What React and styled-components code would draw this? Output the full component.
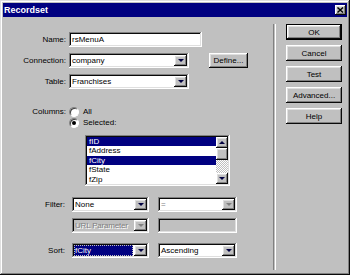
import React from "react";
import styled, { createGlobalStyle } from "styled-components";

const GlobalStyle = createGlobalStyle`
  html, body {
    margin: 0;
    padding: 0;
    background: #c0c0c0;
  }
  body {
    font-family: "Liberation Sans", Arial, sans-serif;
    font-size: 8px;
    color: #000;
  }
`;

// bevels used all over the classic dialog
const raised = `
  box-shadow: inset -1px -1px #0a0a0a, inset 1px 1px #ffffff,
    inset -2px -2px #808080, inset 2px 2px #dfdfdf;
`;
const sunken = `
  box-shadow: inset -1px -1px #ffffff, inset 1px 1px #808080,
    inset -2px -2px #dfdfdf, inset 2px 2px #0a0a0a;
`;

const Window = styled.div`
  width: 350px;
  height: 275px;
  box-sizing: border-box;
  padding: 3px 3px 3px 3px;
  background: #c0c0c0;
  display: flex;
  flex-direction: column;
  box-shadow: inset -1px -1px #0a0a0a, inset 1px 1px #dfdfdf,
    inset -2px -2px #808080, inset 2px 2px #ffffff;
`;

const TitleBar = styled.div`
  height: 14px;
  background: #000080;
  color: #fff;
  font-weight: bold;
  font-size: 9px;
  display: flex;
  align-items: center;
  justify-content: space-between;
  padding: 0 0 0 1px;
`;

const CloseButton = styled.div`
  width: 11px;
  height: 10px;
  margin-right: 1px;
  background: #c0c0c0;
  display: flex;
  align-items: center;
  justify-content: center;
  ${raised}
`;

const Body = styled.div`
  flex: 1;
  display: flex;
`;

const LeftPane = styled.div`
  width: 268px;
  padding-top: 15px;
  display: flex;
  flex-direction: column;
`;

const Separator = styled.div`
  width: 1px;
  margin: 7px 0 2px 2px;
  border-left: 1px solid #808080;
  border-right: 1px solid #ffffff;
`;

const RightPane = styled.div`
  margin-left: 10px;
  padding-top: 7px;
  display: flex;
  flex-direction: column;
  gap: 5px;
`;

const Row = styled.div`
  display: flex;
  align-items: ${(p) => p.$align || "center"};
  margin-top: ${(p) => p.$top || 0}px;
  height: ${(p) => p.$h || 15}px;
`;

const Label = styled.div`
  width: ${(p) => p.$w}px;
  margin-right: ${(p) => p.$gap}px;
  text-align: right;
  white-space: nowrap;
  line-height: 11px;
`;

const Field = styled.div`
  box-sizing: border-box;
  width: ${(p) => p.$w}px;
  height: 15px;
  margin-left: ${(p) => p.$ml || 0}px;
  padding: 2px;
  background: ${(p) => p.$bg || "#ffffff"};
  display: flex;
  align-items: stretch;
  ${sunken}
`;

const Value = styled.div`
  flex: 1;
  display: flex;
  align-items: center;
  padding-left: 1px;
  margin-right: 1px;
  white-space: nowrap;
  overflow: hidden;
  letter-spacing: ${(p) => (p.$disabled ? "-0.2px" : "0")};
  color: ${(p) => (p.$disabled ? "#808080" : p.$selected ? "#fff" : "#000")};
  text-shadow: ${(p) => (p.$disabled ? "1px 1px #fff" : "none")};
  background: ${(p) => (p.$selected ? "#000080" : "transparent")};
  outline: ${(p) => (p.$selected ? "1px dotted #c0c0c0" : "none")};
  outline-offset: -1px;
`;

const DropButton = styled.div`
  width: 13px;
  background: #c0c0c0;
  display: flex;
  align-items: center;
  justify-content: center;
  ${raised}
`;

const Arrow = styled.span`
  width: 0;
  height: 0;
  border-left: 3px solid transparent;
  border-right: 3px solid transparent;
  border-${(p) => (p.$up ? "bottom" : "top")}: 3px solid
    ${(p) => (p.$disabled ? "#808080" : "#000040")};
`;

const Button = styled.div`
  box-sizing: border-box;
  width: ${(p) => p.$w}px;
  height: ${(p) => p.$h || 16}px;
  margin-left: ${(p) => p.$ml || 0}px;
  background: #c0c0c0;
  display: flex;
  align-items: center;
  justify-content: center;
  ${raised}
  ${(p) => p.$default && `border: 1px solid #000;`}
`;

const RadioGroup = styled.div`
  display: flex;
  flex-direction: column;
`;

const RadioItem = styled.div`
  display: flex;
  align-items: center;
  height: 11px;
  gap: 4px;
`;

const Radio = styled.span`
  box-sizing: border-box;
  width: 10px;
  height: 10px;
  border-radius: 50%;
  background: #fff;
  border: 1px solid;
  border-color: #808080 #ffffff #ffffff #808080;
  box-shadow: inset 1px 1px #404040;
  display: flex;
  align-items: center;
  justify-content: center;
  &::after {
    content: "";
    width: 4px;
    height: 4px;
    border-radius: 50%;
    background: ${(p) => (p.$checked ? "#000" : "transparent")};
  }
`;

const ListBox = styled.div`
  box-sizing: border-box;
  width: 145px;
  height: 51px;
  margin: 7px 0 0 82px;
  padding: 2px;
  background: #fff;
  display: flex;
  ${sunken}
`;

const ListItems = styled.div`
  flex: 1;
  display: flex;
  flex-direction: column;
`;

const ListItem = styled.div`
  height: 9.4px;
  line-height: 9.4px;
  padding-left: 2px;
  background: ${(p) => (p.$selected ? "#000080" : "transparent")};
  color: ${(p) => (p.$selected ? "#fff" : "#000")};
`;

const ScrollBar = styled.div`
  width: 12px;
  display: flex;
  flex-direction: column;
  background-color: #c0c0c0;
  background-image: repeating-conic-gradient(#ffffff 0 25%, #c0c0c0 0 50%);
  background-size: 2px 2px;
`;

const ScrollButton = styled.div`
  height: ${(p) => p.$h || 11}px;
  background: #c0c0c0;
  display: flex;
  align-items: center;
  justify-content: center;
  ${raised}
`;

const ScrollTrack = styled.div`
  flex: 1;
`;

const fields = ["fID", "fAddress", "fCity", "fState", "fZip"];
const selectedFields = ["fID", "fCity"];
const buttons = ["OK", "Cancel", "Test", "Advanced...", "Help"];

const Select = ({ w, ml, value, disabled, selected, bg }) => (
  <Field $w={w} $ml={ml} $bg={bg || (disabled ? "#c0c0c0" : "#fff")}>
    <Value $disabled={disabled} $selected={selected}>
      {value}
    </Value>
    <DropButton>
      <Arrow $disabled={disabled} />
    </DropButton>
  </Field>
);

const App = () => {
  return (
    <>
      <GlobalStyle />
      <Window>
        <TitleBar>
          <span>Recordset</span>
          <CloseButton>
            <svg width="7" height="6" viewBox="0 0 7 6">
              <path d="M0.5 0.5 L6 5.5 M6 0.5 L0.5 5.5" stroke="#000" strokeWidth="1.4" />
            </svg>
          </CloseButton>
        </TitleBar>
        <Body>
          <LeftPane>
            <Row>
              <Label $w={63} $gap={3}>Name:</Label>
              <Field $w={133}>
                <Value>rsMenuA</Value>
              </Field>
            </Row>
            <Row $top={6}>
              <Label $w={63} $gap={3}>Connection:</Label>
              <Select w={120} value="company" />
              <Button $w={39} $h={15} $ml={20}>Define...</Button>
            </Row>
            <Row $top={6}>
              <Label $w={63} $gap={3}>Table:</Label>
              <Select w={120} value="Franchises" />
            </Row>
            <Row $top={17} $h={22} $align="flex-start">
              <Label $w={63} $gap={3}>Columns:</Label>
              <RadioGroup>
                <RadioItem>
                  <Radio />
                  <span>All</span>
                </RadioItem>
                <RadioItem>
                  <Radio $checked />
                  <span>Selected:</span>
                </RadioItem>
              </RadioGroup>
            </Row>
            <ListBox>
              <ListItems>
                {fields.map((f) => (
                  <ListItem key={f} $selected={selectedFields.includes(f)}>
                    {f}
                  </ListItem>
                ))}
              </ListItems>
              <ScrollBar>
                <ScrollButton>
                  <Arrow $up />
                </ScrollButton>
                <ScrollButton $h={12} />
                <ScrollTrack />
                <ScrollButton>
                  <Arrow />
                </ScrollButton>
              </ScrollBar>
            </ListBox>
            <Row $top={11}>
              <Label $w={62} $gap={7}>Filter:</Label>
              <Select w={77} value="None" />
              <Select w={79} ml={9} value="=" disabled bg="#fff" />
            </Row>
            <Row $top={6}>
              <Label $w={62} $gap={7} />
              <Select w={77} value="URL Parameter" disabled />
              <Field $w={79} $ml={9} $bg="#c0c0c0" />
            </Row>
            <Row $top={10}>
              <Label $w={62} $gap={7}>Sort:</Label>
              <Select w={77} value="fCity" selected />
              <Select w={79} ml={9} value="Ascending" />
            </Row>
          </LeftPane>
          <Separator />
          <RightPane>
            {buttons.map((b, i) => (
              <Button key={b} $w={56} $default={i === 0}>
                {b}
              </Button>
            ))}
          </RightPane>
        </Body>
      </Window>
    </>
  );
};

export default App;
